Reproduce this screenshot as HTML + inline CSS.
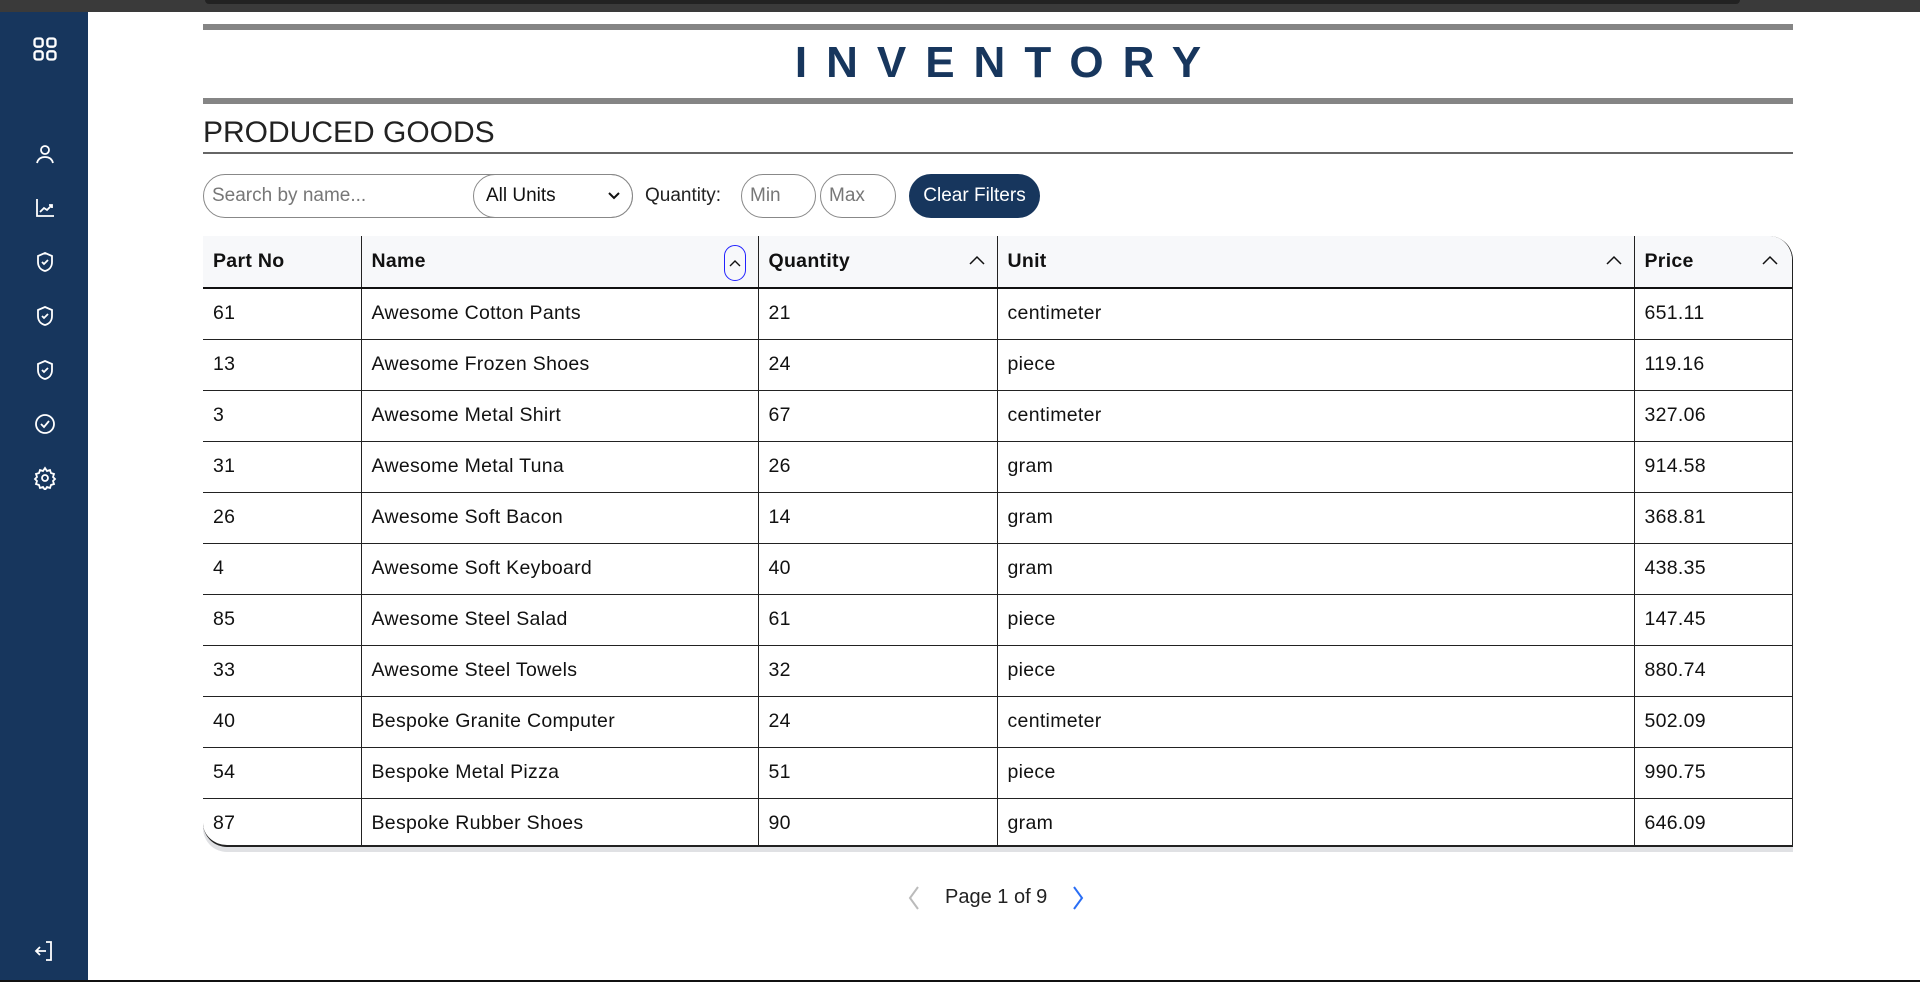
<!DOCTYPE html>
<html><head><meta charset="utf-8"><style>
*{box-sizing:border-box;margin:0;padding:0}
body{width:1920px;height:982px;overflow:hidden;background:#fff;font-family:"Liberation Sans",sans-serif;color:#111;position:relative}
.topbar{position:absolute;left:0;top:0;width:1920px;height:12px;background:#3a3a3a}
.topbar i{position:absolute;left:205px;top:0;width:1535px;height:4px;background:#222;border-radius:0 0 8px 8px}
.side{position:absolute;left:0;top:12px;width:88px;height:969px;background:#17365d}
.bot{position:absolute;left:0;top:980px;width:1920px;height:2px;background:#111}
.ic{position:absolute;left:33px;width:24px;height:24px}
.bar{position:absolute;left:203px;width:1590px;height:6px;background:#858585}
h1{position:absolute;left:203px;width:1590px;top:38px;text-align:center;font-size:44px;font-weight:bold;letter-spacing:19px;color:#17365d;padding-left:19px}
h2{position:absolute;left:203px;top:116px;font-size:30px;font-weight:normal;color:#222}
.hr{position:absolute;left:203px;top:152px;width:1590px;height:2px;background:#666}
.inp{position:absolute;border:1px solid #888;border-radius:22px;height:44px;top:174px;font-size:19px;color:#777;line-height:42px;padding-left:8px}
.lbl{position:absolute;left:645px;top:185px;font-size:19px;color:#222}
.btn{position:absolute;left:909px;top:174px;width:131px;height:44px;border-radius:22px;background:#17365d;color:#fff;font-size:19px;line-height:44px;text-align:center}
.tbl{position:absolute;left:203px;top:236px;width:1590px;height:611px;border-radius:0 24px 0 24px;border-right:1px solid #222;border-bottom:2px solid #222;box-shadow:0 5px 0 #e0e1e4;overflow:hidden}
table{border-collapse:collapse;width:100%;font-size:19.5px;letter-spacing:.3px}
th{background:#f7f8fa;height:52px;text-align:left;padding-left:10px;font-weight:bold;border-bottom:2px solid #111;position:relative}
td{height:51px;padding-left:10px;border-top:1px solid #222}
tr td:not(:first-child),th:not(:first-child){border-left:1px solid #222}
tr:nth-child(2) td{border-top:none}
.ar{position:absolute;right:12px;top:19px}
.pg{position:absolute;left:945px;top:886px;font-size:20px;color:#222}
</style></head><body>
<div class="topbar"><i></i></div>
<div class="side">
<svg class="ic" style="top:23px;left:31px;width:28px;height:28px" viewBox="0 0 24 24" fill="none" stroke="#fff" stroke-width="2"><rect x="3" y="3" width="7" height="7" rx="2"/><rect x="14" y="3" width="7" height="7" rx="2"/><rect x="3" y="14" width="7" height="7" rx="2"/><rect x="14" y="14" width="7" height="7" rx="2"/></svg>
<svg class="ic" style="top:130px" viewBox="0 0 24 24" fill="none" stroke="#fff" stroke-width="1.8"><circle cx="12" cy="8" r="4"/><path d="M4 21c1-4 4-6 8-6s7 2 8 6"/></svg>
<svg class="ic" style="top:184px" viewBox="0 0 24 24" fill="none" stroke="#fff" stroke-width="1.8"><path d="M4 3v17h17M7 16l4-4 3 2 5-5M16 9h3v3"/></svg>
<svg class="ic" style="top:238px" viewBox="0 0 24 24" fill="none" stroke="#fff" stroke-width="1.8"><path d="M12 3l7 3v6c0 5-3 8-7 9-4-1-7-4-7-9V6z"/><path d="M9 12l2 2 4-4"/></svg>
<svg class="ic" style="top:292px" viewBox="0 0 24 24" fill="none" stroke="#fff" stroke-width="1.8"><path d="M12 3l7 3v6c0 5-3 8-7 9-4-1-7-4-7-9V6z"/><path d="M9 12l2 2 4-4"/></svg>
<svg class="ic" style="top:346px" viewBox="0 0 24 24" fill="none" stroke="#fff" stroke-width="1.8"><path d="M12 3l7 3v6c0 5-3 8-7 9-4-1-7-4-7-9V6z"/><path d="M9 12l2 2 4-4"/></svg>
<svg class="ic" style="top:400px" viewBox="0 0 24 24" fill="none" stroke="#fff" stroke-width="1.8"><circle cx="12" cy="12" r="9"/><path d="M8 12l3 3 5-6"/></svg>
<svg class="ic" style="top:454px" viewBox="0 0 24 24" fill="none" stroke="#fff" stroke-width="1.8"><circle cx="12" cy="12" r="3"/><path d="M12 2l2 3 3-1 1 3 3 1-1 3 2 2-2 2 1 3-3 1-1 3-3-1-2 3-2-3-3 1-1-3-3-1 1-3-2-2 2-2-1-3 3-1 1-3 3 1z"/></svg>
<svg class="ic" style="top:927px" viewBox="0 0 24 24" fill="none" stroke="#fff" stroke-width="1.8"><path d="M13 3h5v18h-5M3 12h10M7 8l-4 4 4 4"/></svg>
</div>
<div class="bot"></div>
<div class="bar" style="top:24px"></div>
<h1>INVENTORY</h1>
<div class="bar" style="top:98px"></div>
<h2>PRODUCED GOODS</h2>
<div class="hr"></div>
<div class="inp" style="left:203px;width:430px">Search by name...</div>
<div class="inp" style="left:473px;width:160px;color:#111;padding-left:12px">All Units<svg style="position:absolute;right:12px;top:17px" width="12" height="8" viewBox="0 0 12 8" fill="none" stroke="#111" stroke-width="2"><path d="M1 1l5 5 5-5"/></svg></div>
<div class="lbl">Quantity:</div>
<div class="inp" style="left:741px;width:75px">Min</div>
<div class="inp" style="left:820px;width:76px">Max</div>
<div class="btn">Clear Filters</div>
<div class="tbl"><table>
<colgroup><col style="width:158px"><col style="width:397px"><col style="width:239px"><col style="width:637px"><col></colgroup>
<tr><th>Part No</th><th>Name<span style="position:absolute;right:12px;top:9px;width:22px;height:36px;border:1px solid #22f;border-radius:11px"><svg style="position:absolute;left:4px;top:13px" width="12" height="8" viewBox="0 0 12 8" fill="none" stroke="#111" stroke-width="1.4"><path d="M1 7l5-5 5 5"/></svg></span></th>
<th>Quantity<svg class="ar" width="16" height="10" viewBox="0 0 16 10" fill="none" stroke="#111" stroke-width="1.5"><path d="M1 9l7-7 7 7"/></svg></th>
<th>Unit<svg class="ar" width="16" height="10" viewBox="0 0 16 10" fill="none" stroke="#111" stroke-width="1.5"><path d="M1 9l7-7 7 7"/></svg></th>
<th>Price<svg class="ar" style="right:14px" width="16" height="10" viewBox="0 0 16 10" fill="none" stroke="#111" stroke-width="1.5"><path d="M1 9l7-7 7 7"/></svg></th></tr>
<tr><td>61</td><td>Awesome Cotton Pants</td><td>21</td><td>centimeter</td><td>651.11</td></tr>
<tr><td>13</td><td>Awesome Frozen Shoes</td><td>24</td><td>piece</td><td>119.16</td></tr>
<tr><td>3</td><td>Awesome Metal Shirt</td><td>67</td><td>centimeter</td><td>327.06</td></tr>
<tr><td>31</td><td>Awesome Metal Tuna</td><td>26</td><td>gram</td><td>914.58</td></tr>
<tr><td>26</td><td>Awesome Soft Bacon</td><td>14</td><td>gram</td><td>368.81</td></tr>
<tr><td>4</td><td>Awesome Soft Keyboard</td><td>40</td><td>gram</td><td>438.35</td></tr>
<tr><td>85</td><td>Awesome Steel Salad</td><td>61</td><td>piece</td><td>147.45</td></tr>
<tr><td>33</td><td>Awesome Steel Towels</td><td>32</td><td>piece</td><td>880.74</td></tr>
<tr><td>40</td><td>Bespoke Granite Computer</td><td>24</td><td>centimeter</td><td>502.09</td></tr>
<tr><td>54</td><td>Bespoke Metal Pizza</td><td>51</td><td>piece</td><td>990.75</td></tr>
<tr><td>87</td><td>Bespoke Rubber Shoes</td><td>90</td><td>gram</td><td>646.09</td></tr>
</table></div>
<svg style="position:absolute;left:906px;top:885px" width="16" height="26" viewBox="0 0 16 26" fill="none" stroke="#bbb" stroke-width="2"><path d="M12 2L4 13l8 11"/></svg>
<div class="pg">Page 1 of 9</div>
<svg style="position:absolute;left:1070px;top:885px" width="16" height="26" viewBox="0 0 16 26" fill="none" stroke="#2a6ef5" stroke-width="2"><path d="M4 2l8 11-8 11"/></svg>
</body></html>
